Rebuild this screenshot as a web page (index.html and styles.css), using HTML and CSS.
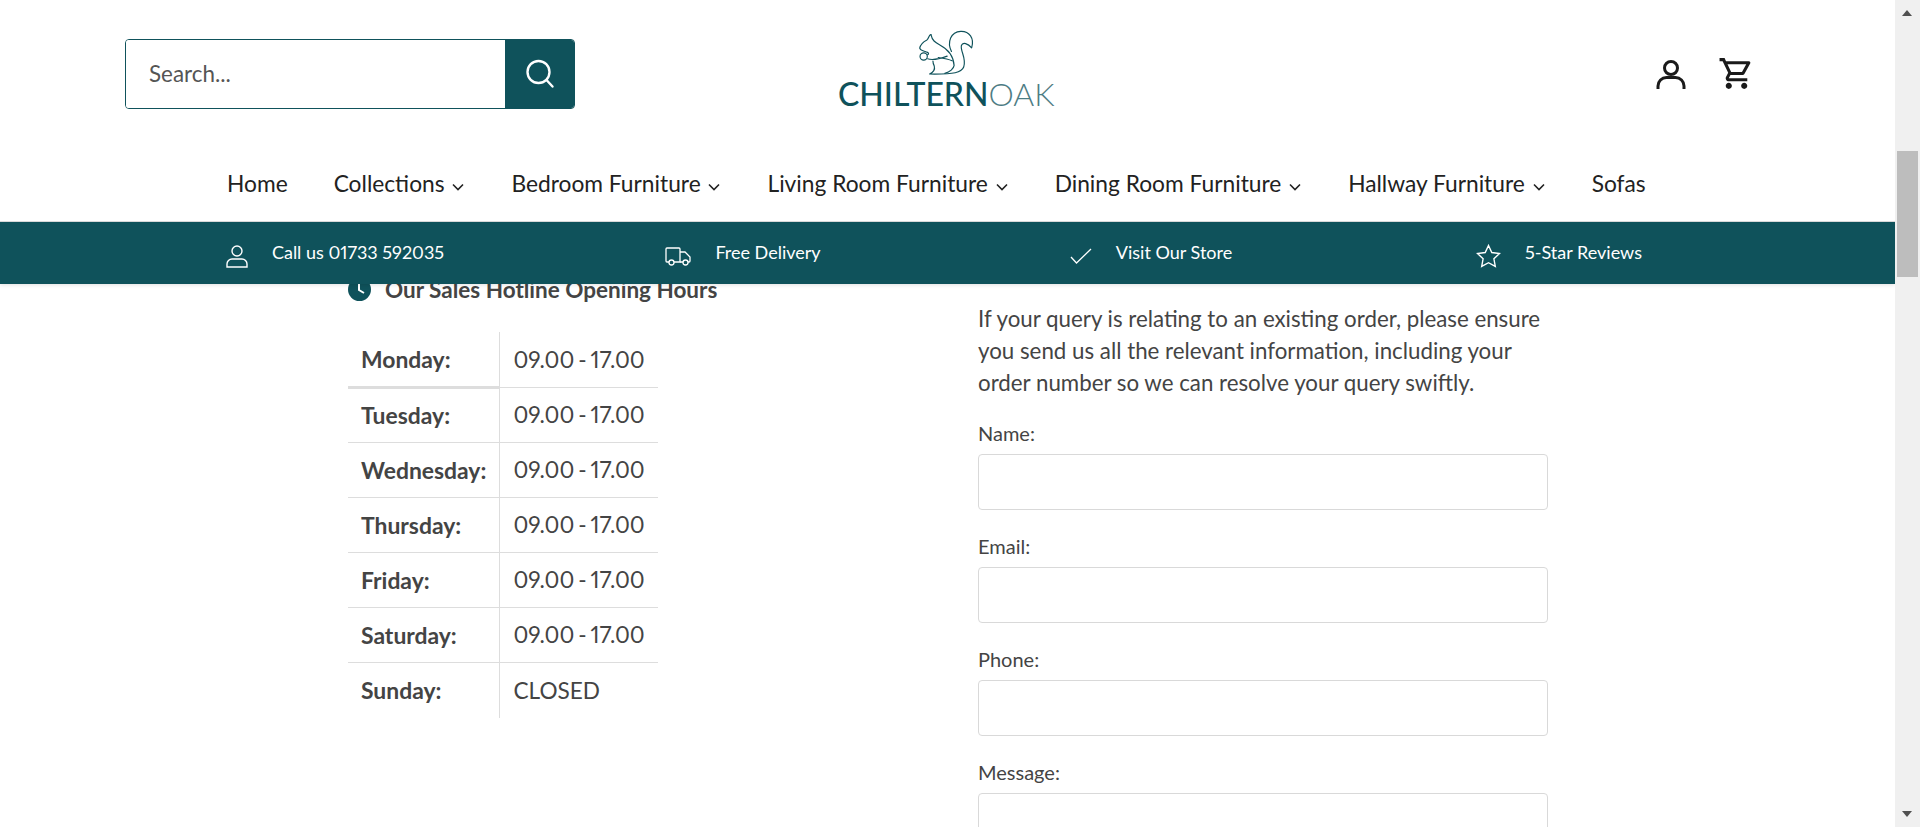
FILE: index.html
```html
<!DOCTYPE html>
<html lang="en">
<head>
<meta charset="UTF-8">
<meta name="viewport" content="width=device-width, initial-scale=1.0">
<title>Contact Us - Chiltern Oak</title>
<link rel="stylesheet" href="styles.css">
</head>
<body>

<div class="page">
    <header class="site-header">
        <div class="header-top">
            <form class="search">
                <input type="text" class="search-input" placeholder="Search...">
                <button type="button" class="search-btn" aria-label="Search">
                    <svg width="30" height="30" viewBox="0 0 30 30" fill="none" stroke="#fff" stroke-width="2.4">
                        <circle cx="13.5" cy="13" r="11"/>
                        <path d="M21.5 21l6 6.5" stroke-linecap="round"/>
                    </svg>
                </button>
            </form>

            <a class="logo" href="#">
                <svg class="squirrel" viewBox="360 40 170 142" width="57" height="47" fill="none" stroke="#0f525b" stroke-width="3.500" stroke-linecap="round" stroke-linejoin="round">
                    <path d="M460 108C446 80 458 48 488 47C514 46 530 68 521 97C510 84 494 78 490 90C486 106 506 128 497 155C490 172 470 177 394 176C402 172 412 166 408 152C405 146 404 142 404 137"/>
                    <path d="M398 57C402 75 410 80 425 88C448 100 466 118 468 150C467 160 455 170 440 174"/>
                    <path d="M398 57C391 58 392 68 386 73C376 78 366 88 364 98C366 106 376 106 386 110C392 112 392 116 388 118"/>
                    <circle cx="376" cy="123" r="11"/>
                    <path d="M388 130C405 136 425 130 447 122M420 126C435 128 450 130 462 136"/>
                </svg>
                <span class="logo-text">CHILTERN<span class="logo-light">OAK</span></span>
            </a>

            <div class="header-icons">
                <a href="#" class="icon-link" aria-label="Account">
                    <svg width="30" height="30" viewBox="0 0 30 30" fill="none" stroke="#1a1a1a" stroke-width="3">
                        <circle cx="15" cy="9" r="6.5"/>
                        <path d="M2 30v-3a8.500 8.500 0 0 1 8.500-8.500h9a8.500 8.500 0 0 1 8.500 8.500v3"/>
                    </svg>
                </a>
                <a href="#" class="icon-link" aria-label="Cart">
                    <svg width="37" height="37" viewBox="0 0 24 24" fill="#1a1a1a">
                        <path d="M15.550 13c.750 0 1.410-.410 1.750-1.030l3.580-6.490c.370-.660-.110-1.480-.870-1.480H5.210l-.940-2H1v2h2l3.600 7.590-1.350 2.440C4.520 15.370 5.480 17 7 17h12v-2H7l1.100-2h7.450zM6.160 6h12.150l-2.760 5H8.530L6.160 6zM7 18c-1.100 0-1.990.900-1.990 2S5.900 22 7 22s2-.900 2-2-.900-2-2-2zm10 0c-1.100 0-1.990.900-1.990 2s.890 2 1.990 2 2-.900 2-2-.900-2-2-2z"/>
                    </svg>
                </a>
            </div>
        </div>

        <nav class="main-nav">
            <a href="#" class="nav-home">Home</a>
            <a href="#">Collections <svg class="chev" viewBox="0 0 12 8" width="12" height="8"><path d="M1 1.500l5 5 5-5"/></svg></a>
            <a href="#">Bedroom Furniture <svg class="chev" viewBox="0 0 12 8" width="12" height="8"><path d="M1 1.500l5 5 5-5"/></svg></a>
            <a href="#">Living Room Furniture <svg class="chev" viewBox="0 0 12 8" width="12" height="8"><path d="M1 1.500l5 5 5-5"/></svg></a>
            <a href="#">Dining Room Furniture <svg class="chev" viewBox="0 0 12 8" width="12" height="8"><path d="M1 1.500l5 5 5-5"/></svg></a>
            <a href="#">Hallway Furniture <svg class="chev" viewBox="0 0 12 8" width="12" height="8"><path d="M1 1.500l5 5 5-5"/></svg></a>
            <a href="#">Sofas</a>
        </nav>

        <div class="usp-bar">
            <div class="usp">
                <svg width="22" height="23" viewBox="0 0 22 23" fill="none" stroke="#fff" stroke-width="1.400">
                    <circle cx="11" cy="6" r="5"/>
                    <path d="M1 22v-3a5 5 0 0 1 5-5h10a5 5 0 0 1 5 5v3z"/>
                </svg>
                <span>Call us 01733 592035</span>
            </div>
            <div class="usp">
                <svg width="26" height="19" viewBox="0 0 26 19" fill="none" stroke="#fff" stroke-width="1.300">
                    <path d="M4 15H2a1 1 0 0 1-1-1V2a1 1 0 0 1 1-1h12a1 1 0 0 1 1 1v13H9"/>
                    <path d="M15 5h5l5 5v4a1 1 0 0 1-1 1h-1M18 15h-3"/>
                    <circle cx="6.500" cy="15.500" r="2.500"/>
                    <circle cx="20.500" cy="15.500" r="2.500"/>
                </svg>
                <span>Free Delivery</span>
            </div>
            <div class="usp">
                <svg width="22" height="16" viewBox="0 0 22 16" fill="none" stroke="#fff" stroke-width="1.300">
                    <path d="M1 9l5.500 6L21 1"/>
                </svg>
                <span>Visit Our Store</span>
            </div>
            <div class="usp">
                <svg width="25" height="24" viewBox="0 0 25 24" fill="none" stroke="#fff" stroke-width="1.400">
                    <path d="M12.500 1.500l3.300 7 7.700 1-5.600 5.300 1.400 7.600-6.800-3.700-6.800 3.700 1.400-7.600L1.500 9.500l7.700-1z"/>
                </svg>
                <span>5-Star Reviews</span>
            </div>
        </div>
    </header>

    <main class="contact">
        <section class="hours">
            <h3 class="hours-title">
                <svg width="23" height="23" viewBox="0 0 23 23">
                    <circle cx="11.500" cy="11.500" r="11.500" fill="#0f525b"/>
                    <path d="M11 5v7l5 3" fill="none" stroke="#fff" stroke-width="2"/>
                </svg>
                Our Sales Hotline Opening Hours
            </h3>
            <table class="hours-table">
                <tr class="first"><th>Monday:</th><td>09.00 - 17.00</td></tr>
                <tr><th>Tuesday:</th><td>09.00 - 17.00</td></tr>
                <tr><th>Wednesday:</th><td>09.00 - 17.00</td></tr>
                <tr><th>Thursday:</th><td>09.00 - 17.00</td></tr>
                <tr><th>Friday:</th><td>09.00 - 17.00</td></tr>
                <tr><th>Saturday:</th><td>09.00 - 17.00</td></tr>
                <tr class="last"><th>Sunday:</th><td>CLOSED</td></tr>
            </table>
        </section>

        <section class="enquiry">
            <p class="enquiry-intro">If your query is relating to an existing order, please ensure you send us all the relevant information, including your order number so we can resolve your query swiftly.</p>
            <form>
                <label class="field">Name:<input type="text"></label>
                <label class="field">Email:<input type="text"></label>
                <label class="field">Phone:<input type="text"></label>
                <label class="field">Message:<textarea></textarea></label>
            </form>
        </section>
    </main>
</div>

<div class="scrollbar">
    <span class="arrow arrow-up"></span>
    <div class="scroll-track"><div class="scroll-thumb"></div></div>
    <span class="arrow arrow-down"></span>
</div>

</body>
</html>
```

FILE: styles.css
```css
* {
    box-sizing: border-box;
}

html, body {
    height: 100%;
    margin: 0;
    overflow: hidden;
}

body {
    display: flex;
    background-color: #fff;
    font-family: Lato, "Open Sans", sans-serif;
    font-variant-numeric: proportional-nums;
    color: #444;
}

a {
    color: inherit;
    text-decoration: none;
}

.page {
    flex: 1;
    min-width: 0;
    height: 827px;
    overflow: hidden;
}

/* header */

.site-header {
    position: relative;
    z-index: 2;
    background-color: #fff;
    box-shadow: 0 1px 4px rgba(0, 0, 0, 0.12);
}

.header-top {
    display: flex;
    align-items: flex-start;
    height: 154px;
    padding: 39px 140px 0 125px;
}

.search {
    display: flex;
    width: 450px;
    height: 70px;
    border: 1px solid #0f525b;
    border-radius: 4px;
    overflow: hidden;
}

.search-input {
    flex: 1;
    min-width: 0;
    padding: 0 23px 2px;
    border: none;
    outline: none;
    font-family: inherit;
    font-size: 22.400px;
}

.search-input::placeholder {
    color: #555;
    opacity: 1;
}

.search-btn {
    display: flex;
    align-items: center;
    justify-content: center;
    width: 69px;
    border: none;
    background-color: #0f525b;
    padding: 0;
}

.logo {
    display: flex;
    flex-direction: column;
    align-items: flex-start;
    width: 218px;
    margin: -9px 0 0 263px;
    color: #0f525b;
}

.squirrel {
    margin: -1px 0 0 80px;
}

.logo-text {
    font-size: 32px;
    font-weight: 500;
    line-height: 36px;
    white-space: nowrap;
}

.logo-light {
    font-weight: 300;
    opacity: 0.75;
}

.header-icons {
    display: flex;
    align-items: flex-start;
    gap: 32px;
    margin-left: auto;
    padding-top: 16px;
}

.icon-link {
    display: block;
    height: 37px;
}

.icon-link svg {
    display: block;
}

.icon-link:first-child {
    padding-top: 4px;
}

.main-nav {
    display: flex;
    align-items: center;
    gap: 47px;
    height: 68px;
    padding: 0 0 8px 227px;
    border-bottom: 1px solid #d9d9d9;
    font-size: 22.750px;
    color: #222;
}

.main-nav a {
    white-space: nowrap;
}

.main-nav .nav-home {
    margin-right: -1px;
}

.chev {
    margin-left: 2px;
    vertical-align: 1px;
    fill: none;
    stroke: #222;
    stroke-width: 1.600;
}

.usp-bar {
    display: grid;
    grid-template-columns: repeat(4, 408px);
    align-items: center;
    height: 62px;
    padding: 0 0 0 131px;
    background-color: #0f525b;
    color: #fff;
    font-size: 18px;
}

.usp {
    display: flex;
    align-items: center;
    justify-content: center;
    gap: 24px;
    padding-bottom: 3px;
}

.usp svg {
    margin-top: 9px;
}

/* main content */

.contact {
    display: flex;
    align-items: flex-start;
    margin-top: -7px;
    padding-left: 348px;
}

.hours {
    width: 630px;
}

.hours-title {
    display: flex;
    align-items: center;
    gap: 14px;
    height: 24px;
    margin: 0 0 31px;
    font-size: 22.500px;
    font-weight: 700;
}

.hours-table {
    width: 310px;
    border-collapse: collapse;
    font-size: 22.600px;
}

.hours-table th,
.hours-table td {
    height: 55px;
    padding: 0 0 0 14px;
    border-bottom: 1px solid #ddd;
    text-align: left;
}

.hours-table td {
    word-spacing: -1.800px;
}

.hours-table th {
    width: 151px;
    padding-left: 13px;
    border-right: 1px solid #ddd;
    font-size: 22.900px;
    font-weight: 700;
}

.hours-table .last th,
.hours-table .last td {
    height: 56px;
    border-bottom: none;
}

.hours-table .first th {
    border-bottom: 3px solid #ddd;
}

.enquiry {
    width: 570px;
    padding-top: 26px;
}

.enquiry-intro {
    margin: 0 0 23px;
    font-size: 22.300px;
    line-height: 32px;
}

.field {
    display: block;
    margin-bottom: 25px;
    font-size: 20px;
    line-height: 22px;
}

.field input,
.field textarea {
    display: block;
    width: 100%;
    height: 56px;
    margin-top: 10px;
    border: 1px solid #d9d9d9;
    border-radius: 4px;
    outline: none;
    resize: none;
}

.field textarea {
    height: 150px;
}

/* scrollbar */

.scrollbar {
    display: flex;
    flex-direction: column;
    flex: none;
    width: 25px;
    height: 100%;
    background-color: #f0f0f0;
}

.scroll-track {
    flex: 1;
    padding: 126px 2px 0;
}

.scroll-thumb {
    height: 126px;
    background-color: #bdbdbd;
}

.arrow {
    display: block;
    height: 25px;
    position: relative;
}

.arrow::after {
    content: "";
    position: absolute;
    left: 7px;
    border-left: 5.500px solid transparent;
    border-right: 5.500px solid transparent;
}

.arrow-up::after {
    top: 10px;
    border-bottom: 6px solid #505050;
}

.arrow-down::after {
    top: 9px;
    border-top: 6px solid #505050;
}
```
